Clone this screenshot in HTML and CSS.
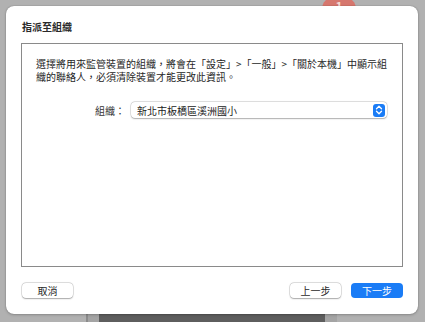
FILE: index.html
```html
<!DOCTYPE html>
<html lang="zh-Hant">
<head>
  <meta charset="UTF-8">
  <title>指派至組織</title>
  <meta name="viewport" content="width=device-width, initial-scale=1.0">
  <link rel="stylesheet" href="styles.css">
</head>
<body>
  <!-- window behind the sheet -->
  <div class="backdrop-badge">1</div>
  <div class="backdrop-panel"><div class="backdrop-panel-inner"></div></div>

  <div class="sheet">
    <h1 class="sheet-title">指派至組織</h1>

    <div class="sheet-box">
      <p class="sheet-text">選擇將用來監管裝置的組織，將會在「設定」&gt;「一般」&gt;「關於本機」中顯示組織的聯絡人，必須清除裝置才能更改此資訊。</p>

      <div class="form-row">
        <label class="form-label">組織：</label>
        <div class="popup">
          <span class="popup-value">新北市板橋區溪洲國小</span>
          <span class="popup-arrows">
            <svg width="8" height="10" viewBox="0 0 8 10">
              <path d="M1.5 3.8 L4 1.3 L6.5 3.8 M1.5 6.2 L4 8.7 L6.5 6.2" fill="none" stroke="#fff" stroke-width="1.3" stroke-linecap="round" stroke-linejoin="round"/>
            </svg>
          </span>
        </div>
      </div>
    </div>

    <div class="sheet-buttons">
      <button class="btn">取消</button>
      <div class="spacer"></div>
      <button class="btn">上一步</button>
      <button class="btn btn-primary">下一步</button>
    </div>
  </div>
</body>
</html>
```

FILE: styles.css
```css
* {
  margin: 0;
  padding: 0;
  box-sizing: border-box;
  font-family: "Noto Sans CJK TC", "Noto Sans", sans-serif;
}

html, body {
  width: 425px;
  height: 322px;
  overflow: hidden;
}

body {
  background: #b1b1b1;
  padding: 6px 7px 8px 6px;
  position: relative;
  display: flex;
}

/* things peeking out behind the sheet */
.backdrop-badge {
  position: absolute;
  top: -3px;
  left: 322px;
  width: 34px;
  height: 24px;
  border-radius: 12px;
  background: #d6776e;
  color: #f4dcd9;
  font-size: 12px;
  font-weight: bold;
  text-align: center;
  line-height: 18px;
}

.backdrop-panel {
  position: absolute;
  left: 86px;
  bottom: 0;
  width: 251px;
  height: 12px;
  background: #a4a4a4;
  border-left: 2px solid #8c8c8c;
  padding: 0 12px 0 11px;
}

.backdrop-panel-inner {
  height: 100%;
  background: #5e5e5e;
}

.sheet {
  position: relative;
  flex: 1;
  background: #fff;
  border-radius: 8px;
  box-shadow: 0 0 1px rgba(0,0,0,0.45), 0 1px 3px rgba(0,0,0,0.2);
  padding: 13px 15px 16px 15px;
  display: flex;
  flex-direction: column;
}

.sheet-title {
  font-size: 10px;
  font-weight: bold;
  color: #2a2a2a;
  line-height: 15px;
  margin-left: 1px;
  margin-bottom: 9px;
}

.sheet-box {
  height: 224px;
  border: 1px solid #8a8a8a;
  padding: 13px 15px 0 14px;
}

.sheet-text {
  font-size: 10px;
  line-height: 13px;
  color: #262626;
  margin-right: -6px;
  margin-bottom: 19px;
}

.form-row {
  display: flex;
  align-items: center;
  gap: 6px;
}

.form-label {
  width: 89px;
  text-align: right;
  font-size: 10px;
  color: #333;
}

.popup {
  flex: 1;
  height: 16px;
  border-radius: 4px;
  background: #fff;
  box-shadow: 0 0 0 0.5px rgba(0,0,0,0.18), 0 0.5px 1.5px rgba(0,0,0,0.25);
  display: flex;
  align-items: center;
  padding: 0 2px 0 6px;
}

.popup-value {
  flex: 1;
  font-size: 10px;
  color: #222;
}

.popup-arrows {
  width: 12px;
  height: 13px;
  border-radius: 3px;
  background: #1a7cf6;
  display: flex;
  align-items: center;
  justify-content: center;
}

.sheet-buttons {
  margin-top: 16px;
  display: flex;
  gap: 10px;
  padding-left: 1px;
}

.spacer {
  flex: 1;
}

.btn {
  width: 51px;
  height: 15px;
  border: none;
  border-radius: 4px;
  background: #fff;
  box-shadow: 0 0 0 0.5px rgba(0,0,0,0.18), 0 0.5px 1.5px rgba(0,0,0,0.28);
  font-size: 10px;
  color: #2a2a2a;
  line-height: 15px;
}

.btn-primary {
  width: 52px;
  background: #1a7cf6;
  color: #fff;
  box-shadow: none;
}
```
